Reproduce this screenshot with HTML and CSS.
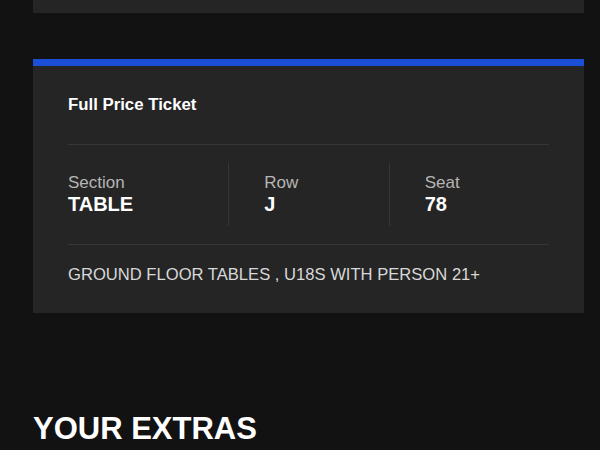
FILE: index.html
```html
<!DOCTYPE html>
<html lang="en">
<head>
    <meta charset="UTF-8">
    <title>Your Tickets</title>
    <link rel="stylesheet" href="styles.css">
</head>
<body>

    <div class="page">
        <div class="card card-prev"></div>

        <div class="card ticket">
            <h3 class="ticket-type">Full Price Ticket</h3>
            <div class="seat-info">
                <div class="seat-col">
                    <span class="seat-label">Section</span>
                    <span class="seat-value">TABLE</span>
                </div>
                <div class="seat-col">
                    <span class="seat-label">Row</span>
                    <span class="seat-value">J</span>
                </div>
                <div class="seat-col">
                    <span class="seat-label">Seat</span>
                    <span class="seat-value">78</span>
                </div>
            </div>
            <p class="ticket-note">GROUND FLOOR TABLES , U18S WITH PERSON 21+</p>
        </div>

        <h2 class="section-title">YOUR EXTRAS</h2>
    </div>

</body>
</html>
```

FILE: styles.css
```css
body { margin: 0; background-color: #121212; font-family: "Liberation Sans", Arial, Helvetica, sans-serif; color: #fff; }
.page { padding: 0 16px 0 33px; }
.card { background-color: #252525; }
.card-prev { height: 13px; margin-bottom: 46px; }
.ticket { border-top: 7px solid #1a4fd6; padding: 29px 35px 28px; }
.ticket-type { margin: 0; font-size: 16.8px; font-weight: bold; line-height: 20px; padding-bottom: 29px; border-bottom: 1px solid #363636; }
.seat-info { display: grid; grid-template-columns: repeat(3, 1fr); padding: 18px 0; border-bottom: 1px solid #363636; }
.seat-col { display: flex; flex-direction: column; justify-content: center; height: 63px; padding-bottom: 2px; box-sizing: border-box; }
.seat-col + .seat-col { border-left: 1px solid #363636; padding-left: 35px; }
.seat-label { font-size: 17px; color: #b5b5b5; line-height: 21px; }
.seat-value { font-size: 20px; font-weight: bold; line-height: 23px; }
.ticket-note { margin: 0; padding-top: 20px; font-size: 16.6px; color: #d8d8d8; line-height: 20px; }
.section-title { margin: 0; padding-top: 98px; font-size: 31px; font-weight: bold; line-height: 36px; }
```
